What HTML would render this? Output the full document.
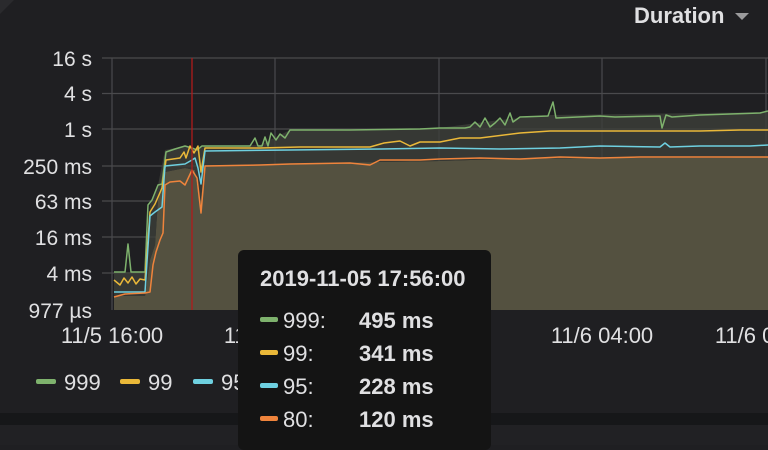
<!DOCTYPE html>
<html><head><meta charset="utf-8"><style>
html,body{margin:0;padding:0;width:768px;height:445px;overflow:hidden;background:#1f1f22;font-family:"Liberation Sans",sans-serif;color:#d8d9da}
.t{position:absolute;white-space:nowrap}
</style></head><body>
<div style="position:absolute;left:0;top:413px;width:768px;height:12px;background:#161719"></div>
<div style="position:absolute;left:0;top:425px;width:768px;height:20px;background:#212124"></div>
<div style="position:absolute;left:0;top:0;width:14px;height:14px;background:#2a2a2d;clip-path:polygon(0 0,100% 0,0 100%)"></div>
<div class="t" style="left:634px;top:3px;font-size:22px;font-weight:bold;color:#e0e0e2">Duration</div>
<div style="position:absolute;left:735px;top:13px;width:0;height:0;border-left:7px solid transparent;border-right:7px solid transparent;border-top:7px solid #9a9a9c"></div>
<svg width="768" height="445" style="position:absolute;left:0;top:0">
<g stroke="#4a4a4d" stroke-width="1.2">
<line x1="102" y1="58" x2="768" y2="58"/><line x1="102" y1="93.5" x2="768" y2="93.5"/><line x1="102" y1="129" x2="768" y2="129"/><line x1="102" y1="166" x2="768" y2="166"/><line x1="102" y1="201" x2="768" y2="201"/><line x1="102" y1="237" x2="768" y2="237"/><line x1="102" y1="273" x2="768" y2="273"/>
<line x1="112" y1="58" x2="112" y2="310"/><line x1="275" y1="58" x2="275" y2="310"/><line x1="439" y1="58" x2="439" y2="310"/><line x1="602" y1="58" x2="602" y2="310"/><line x1="766" y1="58" x2="766" y2="310"/>
</g>
<polygon fill="#545140" points="114,296 145,296 150,260 155,245 158,200 162,183 165,172 185,168 195,170 200,205 205,165 290,164 380,162 440,161 500,159 600,158 700,158 768,157 768,310 114,310"/>
<polygon fill="#3c3f3a" opacity="0.8" points="114,272 145,272 150,205 158,185 165,150 185,146 197,150 205,146 260,145 290,130 439,128 500,120 550,115 768,112 768,157 700,158 600,158 500,159 440,161 380,162 290,164 205,165 200,205 195,170 185,168 165,172 158,200 155,245 150,260 145,296 114,296"/>
<g fill="none" stroke-width="1.5" stroke-linejoin="round">
<polyline stroke="#7eb26d" points="114,272 125,272 128,244 131,272 145,272 148,205 152,200 158,185 162,184 166,152 175,149 185,146 192,148 197,150 202,146 250,146 255,138 258,146 262,146 265,137 268,146 271,133 276,140 280,134 285,138 290,130 350,130 420,129 440,128 465,128 470,127 475,122 480,127 485,118 490,127 495,123 500,118 505,125 510,113 513,122 520,117 548,116 553,102 556,118 600,116 615,117 660,116 662,128 666,115 672,117 700,115 730,114 760,113 768,111"/>
<polyline stroke="#eab839" points="114,280 120,285 124,278 128,283 132,277 136,284 140,279 145,280 150,212 155,204 162,188 166,160 180,158 184,152 186,158 190,146 194,153 198,146 201,172 205,148 260,148 300,147 370,147 384,143 400,141 410,146 420,142 440,142 460,138 480,138 520,133 550,131 600,131 640,131 700,131 740,130 768,130"/>
<polyline stroke="#6ed0e0" points="114,292 145,292 150,216 155,212 162,207 165,166 185,164 192,160 195,158 198,168 201,184 205,151 290,150 380,149 440,148 500,149 560,148 600,146 660,147 665,143 670,147 700,146 750,146 768,145"/>
<polyline stroke="#ef843c" points="114,297 125,294 145,293 150,292 153,265 156,252 160,240 163,233 165,185 170,182 180,181 185,185 192,170 197,178 201,213 205,166 260,165 290,164 350,163 370,165 380,160 420,160 440,159 480,158 520,159 560,157 600,158 640,157 700,157 768,157"/>
</g>
<line x1="192" y1="58" x2="192" y2="310" stroke="#b01b1b" stroke-width="1.3"/>
<g fill="#e0e0e2" font-size="21" font-family="Liberation Sans" text-anchor="end">
<text x="92" y="66">16 s</text><text x="92" y="101">4 s</text><text x="92" y="137">1 s</text><text x="92" y="174">250 ms</text><text x="92" y="209">63 ms</text><text x="92" y="245">16 ms</text><text x="92" y="281">4 ms</text><text x="92" y="318">977 µs</text>
</g>
<g fill="#e0e0e2" font-size="22" font-family="Liberation Sans" text-anchor="middle">
<text x="112" y="343">11/5 16:00</text><text x="275" y="343">11/5 20:00</text><text x="602" y="343">11/6 04:00</text><text x="766" y="343">11/6 08:00</text>
</g>
<g font-size="22" fill="#e0e0e2" font-family="Liberation Sans">
<rect x="36" y="379" width="20" height="5" rx="2" fill="#7eb26d"/><text x="64" y="390">999</text>
<rect x="120" y="379" width="20" height="5" rx="2" fill="#eab839"/><text x="148" y="390">99</text>
<rect x="193" y="379" width="20" height="5" rx="2" fill="#6ed0e0"/><text x="221" y="390">95</text>
</g>
</svg>
<div style="position:absolute;left:238px;top:250px;width:253px;height:200px;background:#141414;border-radius:6px"></div>
<div class="t" style="left:260px;top:266px;font-size:22px;font-weight:bold;color:#e0e0e2">2019-11-05 17:56:00</div>
<div style="position:absolute;left:260px;top:317px;width:18px;height:5px;border-radius:2px;background:#7eb26d"></div>
<div style="position:absolute;left:260px;top:350px;width:18px;height:5px;border-radius:2px;background:#eab839"></div>
<div style="position:absolute;left:260px;top:383px;width:18px;height:5px;border-radius:2px;background:#6ed0e0"></div>
<div style="position:absolute;left:260px;top:416px;width:18px;height:5px;border-radius:2px;background:#ef843c"></div>
<div class="t" style="left:283px;top:304px;font-size:22px;line-height:33px;color:#e0e0e2">999:<br>99:<br>95:<br>80:</div>
<div class="t" style="left:359px;top:304px;font-size:22px;line-height:33px;font-weight:bold;color:#e0e0e2">495 ms<br>341 ms<br>228 ms<br>120 ms</div>
</body></html>
